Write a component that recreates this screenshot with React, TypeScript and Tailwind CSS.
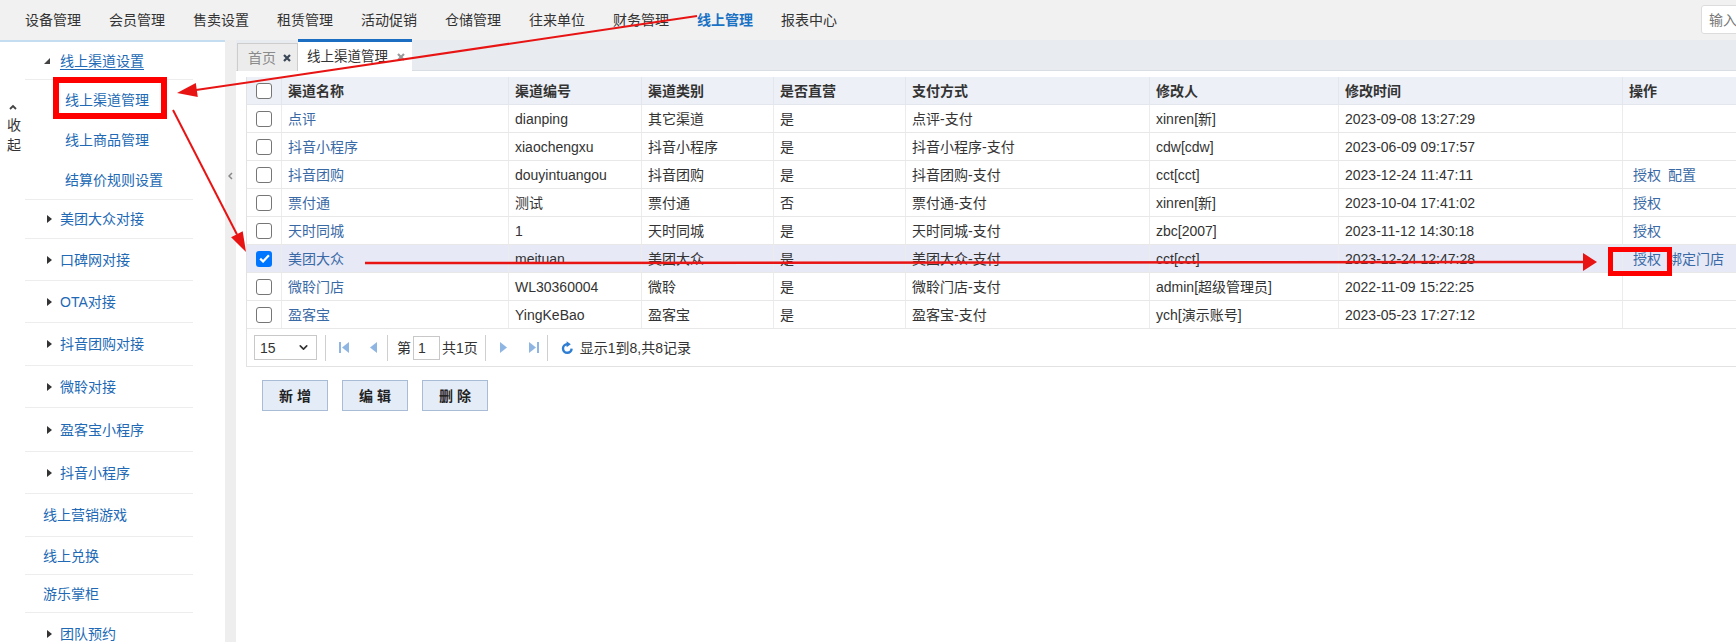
import { ChevronDown } from "lucide-react";

const navItems = ["设备管理", "会员管理", "售卖设置", "租赁管理", "活动促销", "仓储管理", "往来单位", "财务管理", "线上管理", "报表中心"];

type MenuItem = {
  label: string;
  kind: "open" | "sub" | "group" | "plain";
  h: string;
  line?: boolean;
  underline?: boolean;
};

const menu: MenuItem[] = [
  { label: "线上渠道设置", kind: "open", h: "h-[38px]", line: true, underline: true },
  { label: "线上渠道管理", kind: "sub", h: "h-[40px]" },
  { label: "线上商品管理", kind: "sub", h: "h-[40px]" },
  { label: "结算价规则设置", kind: "sub", h: "h-[40px]", line: true },
  { label: "美团大众对接", kind: "group", h: "h-[39px]", line: true },
  { label: "口碑网对接", kind: "group", h: "h-[42px]", line: true },
  { label: "OTA对接", kind: "group", h: "h-[42px]", line: true },
  { label: "抖音团购对接", kind: "group", h: "h-[43px]", line: true },
  { label: "微聆对接", kind: "group", h: "h-[42px]", line: true },
  { label: "盈客宝小程序", kind: "group", h: "h-[44px]", line: true },
  { label: "抖音小程序", kind: "group", h: "h-[42px]", line: true },
  { label: "线上营销游戏", kind: "plain", h: "h-[43px]", line: true },
  { label: "线上兑换", kind: "plain", h: "h-[38px]", line: true },
  { label: "游乐掌柜", kind: "plain", h: "h-[38px]", line: true },
  { label: "团队预约", kind: "group", h: "h-[42px]", line: true },
];

const headers = ["渠道名称", "渠道编号", "渠道类别", "是否直营", "支付方式", "修改人", "修改时间", "操作"];

const rows: { cells: string[]; ops: string[]; checked?: boolean }[] = [
  { cells: ["点评", "dianping", "其它渠道", "是", "点评-支付", "xinren[新]", "2023-09-08 13:27:29"], ops: [] },
  { cells: ["抖音小程序", "xiaochengxu", "抖音小程序", "是", "抖音小程序-支付", "cdw[cdw]", "2023-06-09 09:17:57"], ops: [] },
  { cells: ["抖音团购", "douyintuangou", "抖音团购", "是", "抖音团购-支付", "cct[cct]", "2023-12-24 11:47:11"], ops: ["授权", "配置"] },
  { cells: ["票付通", "测试", "票付通", "否", "票付通-支付", "xinren[新]", "2023-10-04 17:41:02"], ops: ["授权"] },
  { cells: ["天时同城", "1", "天时同城", "是", "天时同城-支付", "zbc[2007]", "2023-11-12 14:30:18"], ops: ["授权"] },
  { cells: ["美团大众", "meituan", "美团大众", "是", "美团大众-支付", "cct[cct]", "2023-12-24 12:47:28"], ops: ["授权", "绑定门店"], checked: true },
  { cells: ["微聆门店", "WL30360004", "微聆", "是", "微聆门店-支付", "admin[超级管理员]", "2022-11-09 15:22:25"], ops: [] },
  { cells: ["盈客宝", "YingKeBao", "盈客宝", "是", "盈客宝-支付", "ych[演示账号]", "2023-05-23 17:27:12"], ops: [] },
];

const cols = "grid grid-cols-[35px_227px_133px_132px_132px_244px_189px_284px_114px]";

function Check({ on }: { on?: boolean }) {
  if (on)
    return (
      <span className="flex h-4 w-4 items-center justify-center rounded-[3px] bg-[#0075ff]">
        <svg width="11" height="9" viewBox="0 0 11 9">
          <path d="M1.2 4.6l2.9 2.9 5.8-6.2" fill="none" stroke="#fff" strokeWidth="2.2" />
        </svg>
      </span>
    );
  return <span className="h-4 w-4 rounded-[3px] border border-[#767676] bg-white" />;
}

function Sep({ className }: { className: string }) {
  return <span className={`h-[26px] w-[2px] border-l border-[#cfcfcf] bg-white ${className}`} />;
}

function Cross({ color }: { color: string }) {
  return (
    <svg width="8" height="8" viewBox="0 0 8 8">
      <path d="M1 1l6 6M7 1L1 7" stroke={color} strokeWidth="2.2" />
    </svg>
  );
}

function PageIcon({ dir, bar }: { dir: "l" | "r"; bar?: boolean }) {
  const c = "#8fb6e2";
  if (dir === "l")
    return (
      <svg width={bar ? 10 : 7} height="11" viewBox={bar ? "0 0 10 11" : "0 0 7 11"}>
        {bar && <rect x="0" y="0" width="2" height="11" fill={c} />}
        <path d={bar ? "M10 0L3 5.5L10 11Z" : "M7 0L0 5.5L7 11Z"} fill={c} />
      </svg>
    );
  return (
    <svg width={bar ? 10 : 7} height="11" viewBox={bar ? "0 0 10 11" : "0 0 7 11"}>
      <path d="M0 0L7 5.5L0 11Z" fill={c} />
      {bar && <rect x="8" y="0" width="2" height="11" fill={c} />}
    </svg>
  );
}

export default function App() {
  return (
    <div className="relative h-[642px] w-[1736px] overflow-hidden bg-white font-['Liberation_Sans','Noto_Sans_CJK_SC',sans-serif] text-[14px] text-[#333]">
      <header className="flex h-10 items-center bg-[#f1f1f1] pl-[11px]">
        {navItems.map((n) => (
          <span
            key={n}
            className={`px-[14px] leading-[20px] ${n === "线上管理" ? "font-bold text-[#1a72c4]" : "text-[#333]"}`}
          >
            {n}
          </span>
        ))}
        <div className="mb-[1px] ml-auto w-[35px] overflow-hidden">
          <input
            placeholder="输入"
            className="h-[29px] w-[160px] rounded-l-[3px] border border-[#dcdcdc] bg-white pl-[7px] text-[14px] outline-none placeholder:text-[#777]"
          />
        </div>
      </header>

      <div className="flex h-[602px]">
        <aside className="flex w-[225px] shrink-0 border-t-2 border-[#c4ddf1] bg-white">
          <div className="flex w-[25px] shrink-0 flex-col items-center pt-[62px] text-[#333]">
            <svg width="8" height="6" viewBox="0 0 8 6">
              <path d="M1 5l3-3 3 3" fill="none" stroke="#444" strokeWidth="1.8" />
            </svg>
            <span className="mt-[5px] pl-[3px] leading-[20px]">收</span>
            <span className="pl-[3px] leading-[20px]">起</span>
          </div>
          <nav className="w-[168px] shrink-0">
            {menu.map((m) => (
              <div
                key={m.label}
                className={`flex items-center text-[#2169b5] ${m.h} ${m.line ? "border-b border-[#ededed]" : ""} ${
                  m.kind === "sub" ? "pl-[40px]" : m.kind === "plain" ? "pl-[18px]" : "pl-[19px]"
                }`}
              >
                {m.kind === "open" && (
                  <span className="flex w-[16px] items-center">
                    <svg width="6" height="6" viewBox="0 0 6 6">
                      <path d="M6 0L6 6L0 6Z" fill="#444" />
                    </svg>
                  </span>
                )}
                {m.kind === "group" && (
                  <span className="flex w-[16px] items-center pl-[3px]">
                    <svg width="5" height="8" viewBox="0 0 5 8">
                      <path d="M0 0L5 4L0 8Z" fill="#333" />
                    </svg>
                  </span>
                )}
                <span className={`leading-[20px] ${m.underline ? "underline underline-offset-[3px]" : ""}`}>{m.label}</span>
              </div>
            ))}
          </nav>
        </aside>

        <div className="flex w-[11px] shrink-0 justify-center bg-[#eeeeee] pt-[132px]">
          <svg width="5" height="8" viewBox="0 0 5 8">
            <path d="M4 1L1 4l3 3" fill="none" stroke="#888" strokeWidth="1.5" />
          </svg>
        </div>

        <main className="min-w-0 flex-1">
          <div className="flex h-[31px] items-end border-b border-[#d9dee5] bg-[#e8ebf0]">
            <div className="mb-[-1px] ml-[1px] flex h-[28px] w-[61px] items-center gap-[7px] border border-b-0 border-[#cdcdcd] bg-[#ececec] pl-[10px]">
              <span className="leading-[20px] text-[#8a8a8a]">首页</span>
              <Cross color="#3b4656" />
            </div>
            <div className="mb-[-1px] flex h-[32px] w-[114px] items-center gap-[9px] border-t-[3px] border-[#1b6ec2] bg-white pl-[9px]">
              <span className="text-[13.5px] leading-[20px] text-[#333]">线上渠道管理</span>
              <Cross color="#9a9a9a" />
            </div>
          </div>

          <div className="pl-[10px] pt-[6px]">
            <div className="w-[1490px] border-l border-[#e2e2e2]">
              <div className={`${cols} h-[28px] border-b border-[#e3e6ec] bg-[#edf0f6] font-bold`}>
                <div className="flex items-center justify-center border-r border-[#e3e6ec]">
                  <Check />
                </div>
                {headers.map((h) => (
                  <div key={h} className="flex items-center border-r border-[#e3e6ec] pl-[6px] leading-[20px]">
                    {h}
                  </div>
                ))}
              </div>
              {rows.map((r) => (
                <div
                  key={r.cells[0]}
                  className={`${cols} h-[28px] border-b border-[#e8e8e8] ${r.checked ? "bg-[#e7e9f7]" : "bg-white"}`}
                >
                  <div className="flex items-center justify-center border-r border-[#ececec]">
                    <Check on={r.checked} />
                  </div>
                  {r.cells.map((c, i) => (
                    <div
                      key={i}
                      className={`flex items-center border-r border-[#ececec] pl-[6px] leading-[20px] ${
                        i === 0 ? "text-[#3a6aa6]" : "text-[#333]"
                      }`}
                    >
                      {c}
                    </div>
                  ))}
                  <div className="flex items-center gap-[7px] pl-[10px] leading-[20px] text-[#3a6aa6]">
                    {r.ops.map((o) => (
                      <span key={o}>{o}</span>
                    ))}
                  </div>
                </div>
              ))}
              <div className="flex h-[38px] items-center border-b border-[#e2e2e2] pl-[7px]">
                <div className="flex h-[25px] w-[63px] items-center justify-between border border-[#c8c8c8] bg-white pl-[5px] pr-[6px]">
                  <span className="leading-[20px]">15</span>
                  <ChevronDown size={13} strokeWidth={3} color="#333" />
                </div>
                <Sep className="ml-[8px]" />
                <span className="ml-[12px] flex">
                  <PageIcon dir="l" bar />
                </span>
                <span className="ml-[21px] flex">
                  <PageIcon dir="l" />
                </span>
                <Sep className="ml-[10px]" />
                <span className="ml-[8px] leading-[20px]">第</span>
                <span className="ml-[2px] flex h-[24px] w-[27px] items-center border border-[#c8c8c8] bg-white pl-[4px] leading-[20px]">
                  1
                </span>
                <span className="ml-[2px] leading-[20px]">共1页</span>
                <Sep className="ml-[7px]" />
                <span className="ml-[13px] flex">
                  <PageIcon dir="r" />
                </span>
                <span className="ml-[22px] flex">
                  <PageIcon dir="r" bar />
                </span>
                <Sep className="ml-[8px]" />
                <span className="ml-[12px] flex">
                  <svg width="13" height="14" viewBox="0 0 13 14">
                    <path d="M10.6 7.6A4.3 4.3 0 1 1 6.2 3.2" fill="none" stroke="#2d7dd2" strokeWidth="2.4" />
                    <path d="M5.6 0.2L9.8 3.2L5.6 6.2Z" fill="#2d7dd2" />
                  </svg>
                </span>
                <span className="ml-[6px] leading-[20px]">显示1到8,共8记录</span>
              </div>
            </div>

            <div className="flex gap-[14px] pl-[16px] pt-[13px]">
              {["新增", "编辑", "删除"].map((b) => (
                <button
                  key={b}
                  className="h-[31px] w-[66px] border border-[#a9bcd6] bg-[#e4ecf8] pl-[4px] text-[14px] font-bold leading-[20px] tracking-[4px] text-[#222]"
                >
                  {b}
                </button>
              ))}
            </div>
          </div>
        </main>
      </div>

      <svg className="pointer-events-none absolute inset-0" width="1736" height="642" viewBox="0 0 1736 642">
        <rect x="56" y="80" width="108" height="36" fill="none" stroke="#ff0000" strokeWidth="6" />
        <rect x="1610.5" y="249.5" width="59" height="24" fill="none" stroke="#ff0000" strokeWidth="5" />
        <line x1="697" y1="16" x2="196" y2="90" stroke="#e81414" strokeWidth="2" />
        <path d="M177 93L195.8 83.1L197.8 97Z" fill="#e81414" />
        <line x1="173" y1="110" x2="237" y2="234.5" stroke="#e81414" strokeWidth="2" />
        <path d="M246 252L242.7 231.2L231.1 237.2Z" fill="#e81414" />
        <line x1="365" y1="263" x2="1584" y2="262" stroke="#e81414" strokeWidth="2.5" />
        <path d="M1597 262L1583 253L1583 271Z" fill="#e81414" />
      </svg>
    </div>
  );
}
